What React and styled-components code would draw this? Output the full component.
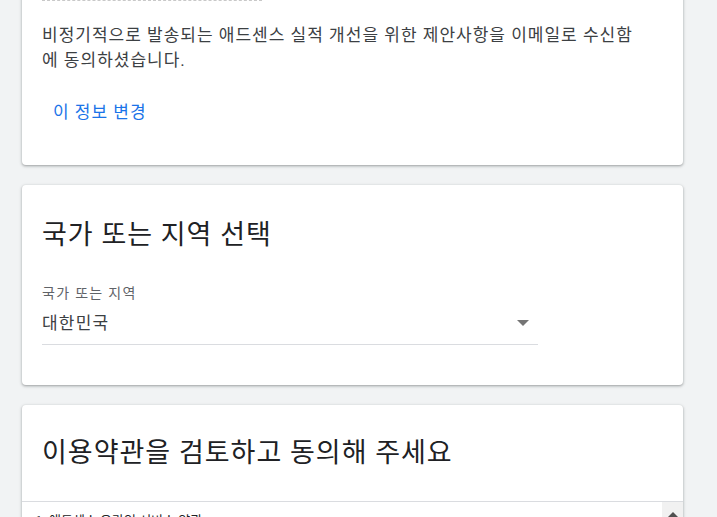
import React from 'react';
import styled, { createGlobalStyle } from 'styled-components';

const GlobalStyle = createGlobalStyle`
  html, body {
    margin: 0;
    padding: 0;
    background: #f1f3f4;
    overflow: hidden;
  }
  body {
    font-family: Roboto, "Noto Sans CJK KR", sans-serif;
  }
`;

const App = () => {
  return (
    <>
      <GlobalStyle />
      <Page>
        <Card $bottom={37}>
          <ReadOnlyField>
            <FieldLabel>이메일 환경설정</FieldLabel>
            <FieldValue>예</FieldValue>
          </ReadOnlyField>
          <Notice>
            비정기적으로 발송되는 애드센스 실적 개선을 위한 제안사항을 이메일로 수신함에
            동의하셨습니다.
          </Notice>
          <TextButton type="button">이 정보 변경</TextButton>
        </Card>

        <Card $bottom={40}>
          <CardTitle>국가 또는 지역 선택</CardTitle>
          <SelectField>
            <FieldLabel>국가 또는 지역</FieldLabel>
            <SelectRow>
              <FieldValue>대한민국</FieldValue>
              <Caret />
            </SelectRow>
          </SelectField>
        </Card>

        <TermsCard>
          <TermsHeader>
            <CardTitle>이용약관을 검토하고 동의해 주세요</CardTitle>
          </TermsHeader>
          <TermsBody>
            <TermsText>
              <p>1. 애드센스 온라인 서비스 약관</p>
              <p>
                Google 애드센스 서비스를 이용해 주셔서 감사합니다. 본 약관은 귀하와
                Google 사이의 계약입니다.
              </p>
            </TermsText>
            <ScrollTrack>
              <ScrollArrow />
            </ScrollTrack>
          </TermsBody>
        </TermsCard>
      </Page>
    </>
  );
};

export default App;

const Page = styled.main`
  display: flex;
  flex-direction: column;
  gap: 20px;
  width: 661px;
  margin: -70px 0 0 22px;
`;

const Card = styled.section`
  background: #fff;
  border-radius: 4px;
  box-shadow: 0 1px 2px 0 rgba(60, 64, 67, 0.3),
    0 1px 3px 1px rgba(60, 64, 67, 0.15);
  padding: 32px 20px ${({ $bottom }) => $bottom ?? 40}px 20px;
`;

const ReadOnlyField = styled.div`
  width: 220px;
  height: 46px;
  margin-top: -8px;
  border-bottom: 1px dashed #c8c8c8;
  display: flex;
  flex-direction: column;
`;

const FieldLabel = styled.div`
  font-size: 14px;
  line-height: 20px;
  letter-spacing: 1.3px;
  color: #5f6368;
`;

const FieldValue = styled.div`
  font-size: 17px;
  line-height: 24px;
  letter-spacing: 1.2px;
  color: #3c4043;
`;

const Notice = styled.p`
  margin: 22px 0 0 0;
  max-width: 595px;
  font-size: 17px;
  line-height: 25px;
  letter-spacing: 1px;
  color: #3c4043;
`;

const TextButton = styled.button`
  display: block;
  margin: 19px 0 0 0;
  height: 36px;
  padding: 0 11px;
  border: none;
  background: transparent;
  font-family: Roboto, "Noto Sans CJK KR", sans-serif;
  font-size: 17px;
  letter-spacing: 1px;
  color: #1a73e8;
  cursor: pointer;
`;

const CardTitle = styled.h2`
  margin: 0;
  font-size: 27px;
  line-height: 36px;
  font-weight: 400;
  letter-spacing: 1px;
  color: #202124;
`;

const SelectField = styled.div`
  width: 496px;
  margin-top: 30px;
  border-bottom: 1px solid #dadce0;
  padding-bottom: 9px;
`;

const SelectRow = styled.div`
  display: flex;
  align-items: center;
  justify-content: space-between;
  margin-top: 8px;
  padding-right: 9px;
`;

const Caret = styled.span`
  width: 0;
  height: 0;
  border-left: 6px solid transparent;
  border-right: 6px solid transparent;
  border-top: 6px solid #757575;
`;

const TermsCard = styled(Card)`
  padding: 0;
  overflow: hidden;
`;

const TermsHeader = styled.div`
  padding: 30px 20px 30px 20px;
  border-bottom: 1px solid #dadce0;
`;

const TermsBody = styled.div`
  display: flex;
  height: 300px;
`;

const TermsText = styled.div`
  flex: 1;
  padding: 9px 13px;
  font-size: 13px;
  line-height: 20px;
  color: #202124;

  p {
    margin: 0 0 12px 0;
  }
`;

const ScrollTrack = styled.div`
  width: 21px;
  background: #f1f1f1;
  display: flex;
  justify-content: center;
  padding-top: 10px;
`;

const ScrollArrow = styled.span`
  width: 0;
  height: 0;
  border-left: 5px solid transparent;
  border-right: 5px solid transparent;
  border-bottom: 5px solid #505050;
`;
